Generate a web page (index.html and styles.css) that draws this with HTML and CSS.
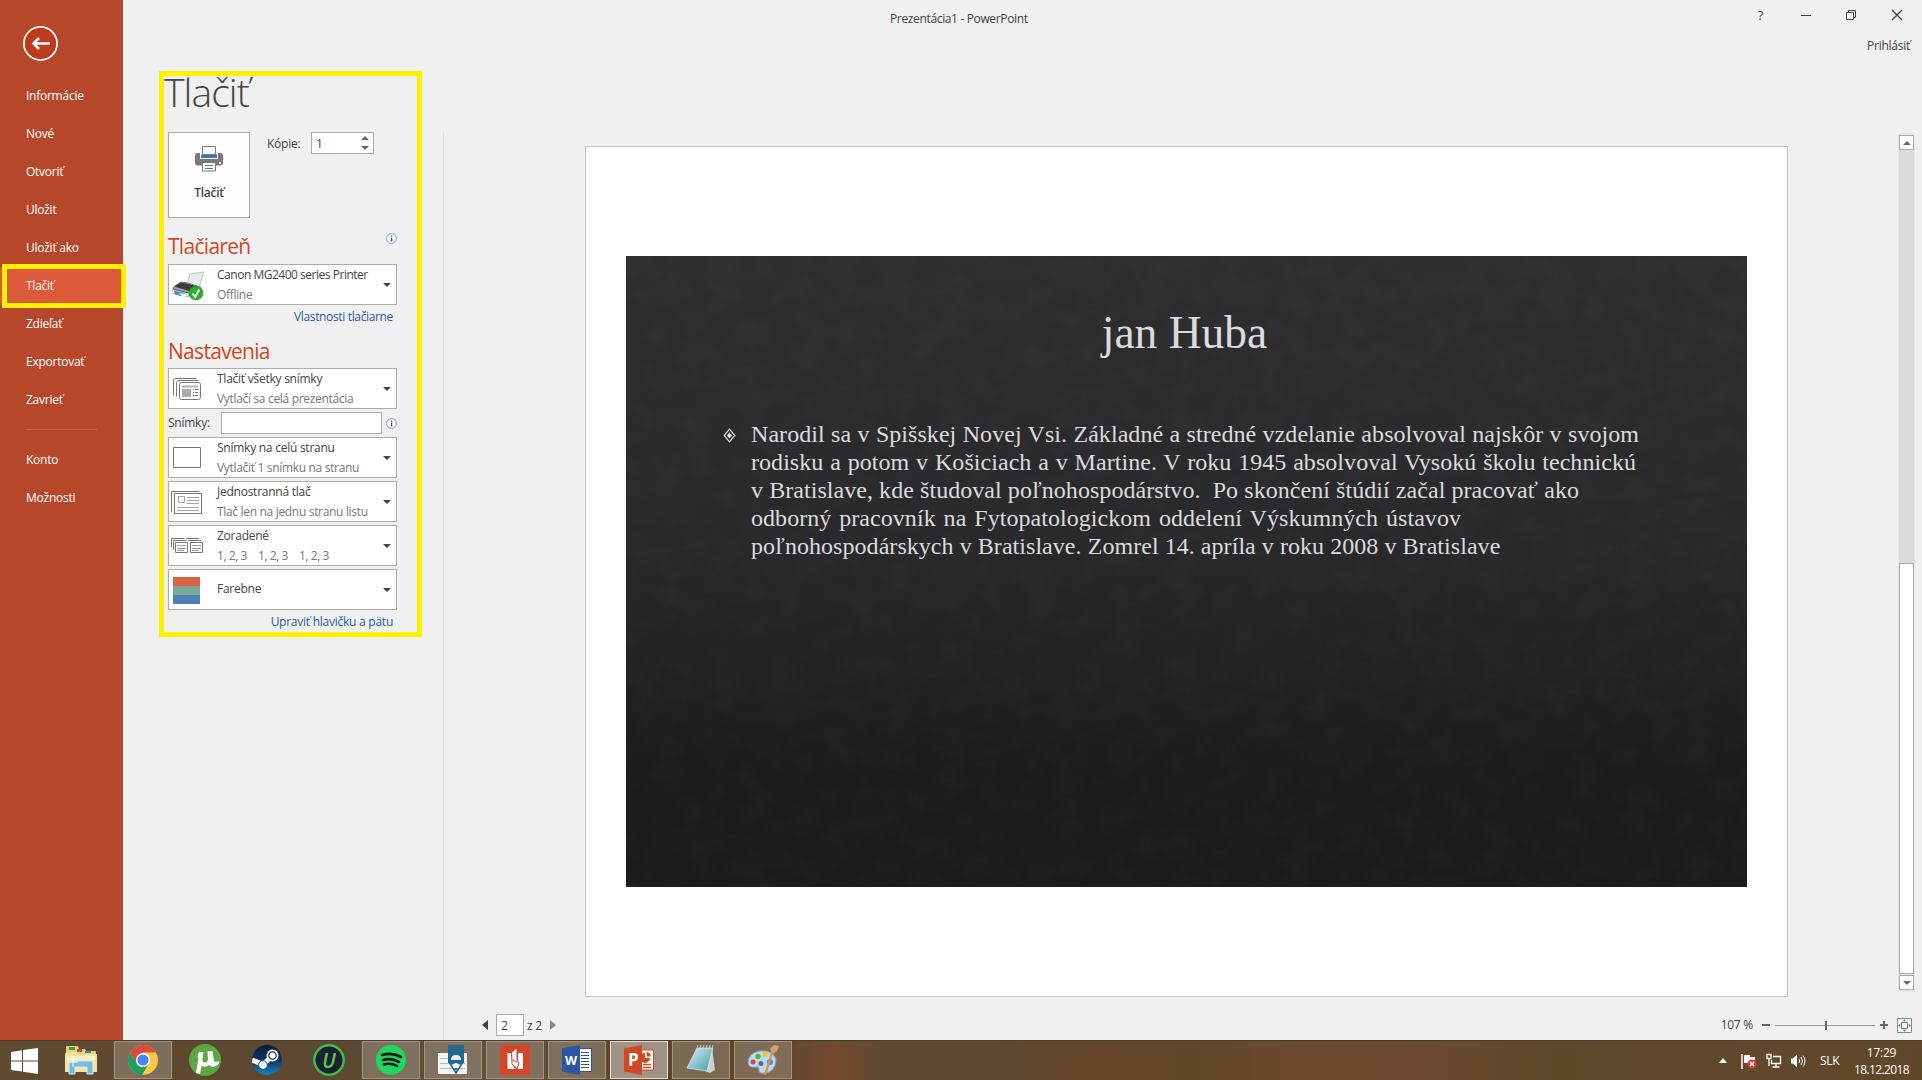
FILE: index.html
```html
<!DOCTYPE html>
<html lang="sk">
<head>
<meta charset="utf-8">
<title>Prezentácia1 - PowerPoint</title>
<link rel="stylesheet" href="styles.css">
</head>
<body>
<div class="backstage">
  <nav class="nav">
    <svg class="back" width="36" height="36" viewBox="0 0 36 36" fill="none" stroke="#fff"><circle cx="18.500" cy="17.500" r="16.600" fill="#be3a1c" stroke-width="1.800"/><path d="M28 17.500H11.500M17 12L11.500 17.500l5.500 5.500" stroke-width="2.600"/></svg>
    <a class="nav-item">Informácie</a>
    <a class="nav-item">Nové</a>
    <a class="nav-item">Otvoriť</a>
    <a class="nav-item">Uložit</a>
    <a class="nav-item">Uložiť ako</a>
    <a class="nav-item active">Tlačiť</a>
    <a class="nav-item">Zdieľať</a>
    <a class="nav-item">Exportovať</a>
    <a class="nav-item">Zavrieť</a>
    <hr class="nav-rule">
    <a class="nav-item">Konto</a>
    <a class="nav-item">Možnosti</a>
    <div class="mark mark-nav"></div>
  </nav>
  <main class="main">
    <header class="titlebar">
      <div class="doc-title">Prezentácia1 - PowerPoint</div>
      <div class="window-side">
        <div class="window-buttons">
          <span class="help">?</span>
          <svg width="10" height="12" viewBox="0 0 10 12"><path d="M0 6.500h10" stroke="#444"/></svg>
          <svg width="10" height="12" viewBox="0 0 10 12" fill="none" stroke="#444"><path d="M.5 3.500h7v7h-7zM2.500 3.500v-2h7v7h-2"/></svg>
          <svg width="12" height="12" viewBox="0 0 12 12"><path d="M1 1l10 10M11 1L1 11" stroke="#444" stroke-width="1.400"/></svg>
        </div>
        <a class="sign-in">Prihlásiť</a>
      </div>
    </header>
    <h1 class="heading">Tlačiť</h1>
    <div class="content">
      <section class="settings">
        <div class="print-row">
          <button class="print-button">
            <svg width="28" height="26" viewBox="0 0 28 26"><path d="M1.500 7H26.500l1.500 2v9l-2 1.500H2L0 18V9z" fill="#7a7a7a"/><path d="M5 6.500h18V13H5z" fill="#fff"/><path d="M6 8.500h16V12H6z" fill="#3f74ae"/><path d="M7.500.5h13v8h-13z" fill="#fff" stroke="#7a7a7a"/><path d="M7.500 16.500h13v8.500h-13z" fill="#fff" stroke="#7a7a7a"/><path d="M10 19.500h8M10 22.500h8" stroke="#4b87a8"/><path d="M24 16h2v2h-2z" fill="#fff"/></svg>
            <span>Tlačiť</span>
          </button>
          <span class="copies-label">Kópie:</span>
          <div class="spinner"><span>1</span>
            <svg width="8" height="14" viewBox="0 0 8 14" fill="#666"><path d="M0 4l4-4 4 4zM0 10l4 4 4-4z"/></svg>
          </div>
        </div>
        <div class="section-row"><h2>Tlačiareň</h2>
          <svg class="info" width="11" height="11" viewBox="0 0 11 11"><circle cx="5.500" cy="5.500" r="4.900" fill="#fbfcfe" stroke="#7c9ccb"/><path d="M5 2.500h1.200v1.200H5zM5 4.600h1.200v3.800H5z" fill="#41536d"/></svg>
        </div>
        <div class="drop">
          <svg width="34" height="30" viewBox="0 0 34 30">
            <path d="M18.500 3l14-2-4 15-12-2z" fill="#e9ecee" stroke="#a9aeb2" stroke-width=".7"/>
            <path d="M1 17l8-6 8 1 13 4v4l-13 6-15-3z" fill="#9aa3aa"/><path d="M3 15.500l7-4.500 18 4.500-8 5z" fill="#3b3e41"/><path d="M10 11l7 1 9 3" fill="none" stroke="#777c80"/>
            <path d="M1 17.500l19 4.500-4 3-14-3z" fill="#e3e8ec"/><path d="M3 19.500l11 2.500-2 3.500-8-2z" fill="#4d8fc2"/><path d="M8 22l6 1 3 2-5 1z" fill="#f2f6f9"/><path d="M2 18l18 4.500" stroke="#50565b"/>
            <circle cx="25" cy="22" r="7" fill="#2ab02b" stroke="#179019" stroke-width=".6"/><path d="M21.500 22.500l2.700 3.500 4-7.500" fill="none" stroke="#fff" stroke-width="2"/>
          </svg>
          <div class="drop-text"><span class="printer-name">Canon MG2400 series Printer</span><small>Offline</small></div>
          <i class="caret"></i>
        </div>
        <a class="link printer-link">Vlastnosti tlačiarne</a>
        <div class="section-row second"><h2>Nastavenia</h2></div>
        <div class="drop">
          <svg width="34" height="30" viewBox="0 0 34 30" fill="none" stroke="#777"><path d="M2.500 20.500v-15q0-2 2-2h21M5.500 21.500v-14q0-2 2-2h20"/><rect x="8.500" y="7.500" width="21" height="17" rx="2"/><path d="M11 11.500h16" stroke="#b0b0b0" stroke-width="2"/><path d="M11 14h9v8h-9z" fill="#aaa" stroke="none"/><path d="M22 14.500h5M22 17.500h5M22 20.500h5" stroke-dasharray="1 1 3"/></svg>
          <div class="drop-text"><span>Tlačiť všetky snímky</span><small>Vytlačí sa celá prezentácia</small></div>
          <i class="caret"></i>
        </div>
        <div class="slides-row"><label>Snímky:</label><div class="field"></div>
          <svg class="info" width="11" height="11" viewBox="0 0 11 11"><circle cx="5.500" cy="5.500" r="4.900" fill="#fbfcfe" stroke="#7c9ccb"/><path d="M5 2.500h1.200v1.200H5zM5 4.600h1.200v3.800H5z" fill="#41536d"/></svg>
        </div>
        <div class="drop">
          <svg width="34" height="30" viewBox="0 0 34 30"><path d="M2.500 3.500h27v20h-27z" fill="#fff" stroke="#777"/></svg>
          <div class="drop-text"><span>Snímky na celú stranu</span><small>Vytlačiť 1 snímku na stranu</small></div>
          <i class="caret"></i>
        </div>
        <div class="drop">
          <svg width="34" height="30" viewBox="0 0 34 30" fill="none" stroke="#777"><path d="M.5 24V3.500h28M3.500 5.500h27v20h-27z"/><path d="M7.500 8.500h6v6h-6zM16 9.500h12M16 12.500h12M16 15.500h12M6 19.500h22M6 22.500h22" stroke="#a5a5a5"/></svg>
          <div class="drop-text"><span>Jednostranná tlač</span><small>Tlač len na jednu stranu listu</small></div>
          <i class="caret"></i>
        </div>
        <div class="drop">
          <svg width="34" height="30" viewBox="0 0 34 30" fill="none" stroke="#777"><path d="M.5 15V6.500h13M2.500 18V8.500h13M15 6.500h13M17 8.500h13"/><path d="M4.500 10.500h12v10h-12zM19.500 10.500h12v10h-12z"/><path d="M6 13.500h9M6 16.500h9M6 18.500h7M21 13.500h9M21 16.500h9M21 18.500h7" stroke="#999"/></svg>
          <div class="drop-text"><span>Zoradené</span><small class="sets">1, 2, 3<b></b>1, 2, 3<b></b>1, 2, 3</small></div>
          <i class="caret"></i>
        </div>
        <div class="drop">
          <svg width="34" height="30" viewBox="0 0 34 30"><path d="M2 1h27v9H2z" fill="#d96445"/><path d="M2 10h27v9H2z" fill="#78a898"/><path d="M2 19h27v9H2z" fill="#4b80b9"/></svg>
          <div class="drop-text single"><span>Farebne</span></div>
          <i class="caret"></i>
        </div>
        <a class="link">Upraviť hlavičku a pätu</a>
        <div class="mark mark-panel"></div>
      </section>
      <section class="preview">
        <div class="stage">
          <div class="sheet">
            <article class="slide">
              <svg class="grain" width="1121" height="631"><filter id="grain"><feTurbulence type="fractalNoise" baseFrequency=".035 .045" numOctaves="5" seed="4"/><feColorMatrix values="0 0 0 0 1  0 0 0 0 1  0 0 0 0 1  .5 0 0 0 -.17"/></filter><rect width="1121" height="631" filter="url(#grain)" opacity=".08"/></svg>
              <h3>jan Huba</h3>
              <div class="bullet-row">
                <svg width="13" height="15" viewBox="0 0 13 15"><path d="M6.500 1.200l5.300 6.300-5.300 6.300L1.200 7.500z" fill="none" stroke="#ddd" stroke-width="1.200"/><path d="M6.500 4.500l2.600 3-2.600 3-2.600-3z" fill="#ddd"/></svg>
                <div class="lines">
                  <p class="l1">Narodil sa v Spišskej Novej Vsi. Základné a stredné vzdelanie absolvoval najskôr v svojom</p>
                  <p class="l2">rodisku a potom v Košiciach a v Martine. V roku 1945 absolvoval Vysokú školu technickú</p>
                  <p class="l3">v Bratislave, kde študoval poľnohospodárstvo.&nbsp; Po skončení štúdií začal pracovať ako</p>
                  <p class="l4">odborný pracovník na Fytopatologickom oddelení Výskumných ústavov</p>
                  <p class="l5">poľnohospodárskych v Bratislave. Zomrel 14. apríla v roku 2008 v Bratislave</p>
                </div>
              </div>
            </article>
          </div>
          <div class="scrollbar">
            <div class="sb-btn"><i class="up"></i></div>
            <div class="sb-track"></div>
            <div class="sb-thumb"></div>
            <div class="sb-btn"><i class="down"></i></div>
          </div>
        </div>
        <footer class="status">
          <div class="pager">
            <svg width="6" height="10" viewBox="0 0 6 10"><path d="M6 0v10L0 5z" fill="#444"/></svg>
            <div class="page-no">2</div><span>z 2</span>
            <svg width="6" height="10" viewBox="0 0 6 10"><path d="M0 0v10l6-5z" fill="#888"/></svg>
          </div>
          <div class="zoom">
            <span>107 %</span>
            <svg width="128" height="16" viewBox="0 0 128 16"><path d="M0 8h8M118 8h8M122 4v8" stroke="#666" stroke-width="2"/><path d="M13 8.500h100" stroke="#999da6"/><path d="M64 4v9" stroke="#666" stroke-width="2"/></svg>
            <svg width="15" height="15" viewBox="0 0 15 15"><path d="M.5.5h14v14H.5z" fill="#fdfdfd" stroke="#888"/><path d="M4.500 4.500h6v6h-6z" fill="none" stroke="#777"/><path d="M5.500 3.200h4l-2-2zM5.500 11.800h4l-2 2zM3.200 5.500v4l-2-2zM11.800 5.500v4l2-2z" fill="#4479b5"/></svg>
          </div>
        </footer>
      </section>
    </div>
  </main>
</div>
<div class="taskbar">
  <div class="start"><svg width="27" height="26" viewBox="0 0 27 26" fill="#fff"><path d="M0 4l11-1.700V12.500H0zM12 2.100L27 0v12.500H12zM0 13.500h11v10L0 22zM12 13.500h15V26l-15-2.200z"/></svg></div>
  <div class="task plain"><svg width="32" height="30" viewBox="0 0 32 30"><path d="M1 2q0-1 1-1h11l1 3h6l1 2h9q1 0 1 1v19H1z" fill="#e7cf83"/><path d="M4 2h6v3H4z" fill="#35a343"/><path d="M12 4h5v3h-5z" fill="#cf4b24"/><path d="M20 6h6v2h-6z" fill="#2f8bd0"/><path d="M0 8l12-1 2 2h18v18H0z" fill="#f6e3a2"/><path d="M2 11h28v4H2z" fill="#fbefc5"/><path d="M4 29V18q0-2 2-2h20q2 0 2 2v11h-6v-7H10v7z" fill="#73bbdf" stroke="#d2edf8"/><path d="M8 12v10M3 17h10" stroke="#fff"/></svg></div>
  <div class="task"><svg width="30" height="30" viewBox="0 0 30 30"><circle cx="15" cy="15" r="15" fill="#f9c845"/><path d="M2 7.500A15 15 0 0 1 28 7.500H15L8.500 18z" fill="#dc4a3d"/><path d="M2 7.500A15 15 0 0 0 14 30l6-10-5 2q-5 0-6.500-4z" fill="#1d9f5e"/><circle cx="15" cy="15" r="7" fill="#fff"/><circle cx="15" cy="15" r="5.600" fill="#4587f0"/></svg></div>
  <div class="task plain"><svg width="32" height="32" viewBox="0 0 32 32"><circle cx="16" cy="16" r="16" fill="#5aa83f"/><path d="M10 8l-1.500 4 1 2-2.500 15 4 1 1.500-8q4 2 8-1 2 3 5 1.500 4-1 5-4.500l-1-1q-3 2-4.500 0L23.500 7h-5l.5 9q-1 2.500-3 2.500-3-.5-2.500-3.500L14.500 8z" fill="#fff"/></svg></div>
  <div class="task plain"><svg width="30" height="30" viewBox="0 0 30 30"><defs><linearGradient id="steam" x2="0" y2="1"><stop offset="0" stop-color="#10193b"/><stop offset=".5" stop-color="#103360"/><stop offset="1" stop-color="#1687bf"/></linearGradient></defs><circle cx="15" cy="15" r="15" fill="url(#steam)"/><path d="M0 15l11 4.500L20 11" fill="none" stroke="#fff" stroke-width="5"/><circle cx="20.500" cy="10.500" r="6" fill="#fff"/><circle cx="20.500" cy="10.500" r="3.700" fill="#fff" stroke="#14325d" stroke-width="1.300"/><circle cx="11" cy="20" r="4.300" fill="#fff" stroke="#14568c"/></svg></div>
  <div class="task plain"><svg width="32" height="32" viewBox="0 0 32 32"><circle cx="16" cy="16" r="14.700" fill="#1b2130" stroke="#42bd4f" stroke-width="2.400"/><path d="M14 9l-2 9q-.8 5 3 5t5-5l2-9" fill="none" stroke="#5cc34d" stroke-width="2.500"/></svg></div>
  <div class="task"><svg width="30" height="30" viewBox="0 0 30 30"><circle cx="15" cy="15" r="15" fill="#1ed760"/><path d="M6 10q10-3 19 2M7 15q9-2.500 16 2M8 19.500q7-2 13 1.500" fill="none" stroke="#121512" stroke-width="2.600" stroke-linecap="round"/></svg></div>
  <div class="task"><svg width="30" height="30" viewBox="0 0 30 30"><path d="M0 8h29v21H0z" fill="#f5f5f5"/><path d="M2 13.500h25M2 18.500h25M2 23.500h25" stroke="#bbb"/><path d="M10 0h16v18H10z" fill="#25688c"/><path d="M11 17l7 11 7-11-3 2-4-2-4 2z" fill="#fff" stroke="#25688c" stroke-width="1.500"/><path d="M13 15q0-5 5-5t5 5z" fill="#eee"/><path d="M16 23h4l-2 3z" fill="#25688c"/></svg></div>
  <div class="task"><svg width="30" height="30" viewBox="0 0 30 30"><path d="M0 0h30v30H0z" fill="#d4452a"/><path d="M7.500 8H12v11l3 5H7.500zM18 8h5v16h-8l3-3z" fill="#fff"/><path d="M11.500 7L17 3v12l2 3-2 6-5-5z" fill="#fff" stroke="#d4452a"/><path d="M12 15l5 2" stroke="#d4452a"/></svg></div>
  <div class="task"><svg width="30" height="30" viewBox="0 0 30 30"><path d="M16 3.500h13.500v23H16z" fill="#fff" stroke="#2b579a"/><path d="M19 7.500h8M19 10.500h8M19 13.500h8M19 16.500h8M19 19.500h8M19 22.500h8" stroke="#2b579a"/><path d="M0 3.500L18 0v30L0 26.500z" fill="#2b57a0"/><text x="3" y="20" class="badge-letter word">W</text></svg></div>
  <div class="task current"><svg width="30" height="30" viewBox="0 0 30 30"><path d="M16 5h13.500v20H16z" fill="#fff" stroke="#d24726"/><path d="M19 19.500h8M19 22.500h8" stroke="#d24726" stroke-width="1.500"/><path d="M21 8v5h5a5 5 0 1 1-5-5zM22.500 7a5 5 0 0 1 4.500 4.500h-4.500z" fill="#d24726"/><path d="M0 3.500L18 0v30L0 26.500z" fill="#d24726"/><text x="4" y="20.500" class="badge-letter">P</text></svg></div>
  <div class="task"><svg width="32" height="30" viewBox="0 0 32 30"><defs><linearGradient id="note" x2="1" y2="1"><stop offset="0" stop-color="#d8f1f4"/><stop offset="1" stop-color="#3e9aa9"/></linearGradient></defs><path d="M27 3l3 22-5 3-5-2z" fill="#c8d3d0"/><path d="M12 3h16l-6 23-20-3z" fill="url(#note)" stroke="#e2f3f3" stroke-width=".7"/><path d="M12 4L13 0M15 4l1-4M18 4l1-4M21 4l1-4M24 4l1-4M27 4l1-4" stroke="#ccc"/></svg></div>
  <div class="task"><svg width="32" height="32" viewBox="0 0 32 32"><path d="M1 19Q1 9 13 7q14-1 16 9-1 12-11 13-7 1-6-4 0-3-4-2-6 1-7-4z" fill="#b9daf0" stroke="#7caed2"/><circle cx="6" cy="18" r="2.500" fill="#da4a3a"/><circle cx="11" cy="12.500" r="2.700" fill="#58b447"/><circle cx="18" cy="10" r="2.700" fill="#f0c32f"/><circle cx="14" cy="19.500" r="2.500" fill="#5b6f83"/><circle cx="23" cy="18" r="3" fill="#3f8edb"/><path d="M26 6L18 31" stroke="#dd9237" stroke-width="2.400"/><path d="M23 5l4-4 5 1-2 5-4 3z" fill="#d3a26b"/></svg></div>
  <div class="tray">
    <svg width="8" height="5" viewBox="0 0 8 5"><path d="M0 5l4-5 4 5z" fill="#fff"/></svg>
    <svg class="flag" width="16" height="16" viewBox="0 0 16 16"><path d="M1 1v15" stroke="#fff" stroke-width="1.500"/><path d="M3 2h6v2h5v6H3z" fill="#fff"/><circle cx="11" cy="11" r="4.500" fill="#dc3a32"/><path d="M9 9l4 4M13 9l-4 4" stroke="#fff" stroke-width="1.500"/></svg>
    <svg class="net" width="16" height="16" viewBox="0 0 16 16" fill="none" stroke="#fff" stroke-width="1.300"><path d="M7 3.500h7.500v7H5.500V7M10 10.500v3M6.500 14h7M1 1.500h4v4H1zM3 5.500V13"/></svg>
    <svg class="vol" width="16" height="16" viewBox="0 0 16 16"><path d="M1 5.500h2l4-4v13l-4-4H1z" fill="#fff"/><path d="M9 6q1.500 2 0 4M11 4q3 4 0 8M13 2.500q4 5.500 0 11" fill="none" stroke="#fff"/></svg>
    <span class="lang">SLK</span>
    <div class="clock"><span>17:29</span><span class="date">18.12.2018</span></div>
  </div>
</div>
</body>
</html>
```
FILE: styles.css
```css
* { box-sizing: border-box; }
body { margin: 0; width: 1922px; height: 1080px; overflow: hidden; background: #f0f0f0; font: 12px/16px "Open Sans", "Noto Sans", sans-serif; color: #444; letter-spacing: -.25px; }
svg { display: block; flex: none; }
h1, h2, h3, p { margin: 0; font-weight: 400; }
.backstage { display: flex; height: 1040px; }
.nav { position: relative; width: 123px; background: #b7472a; color: #fff; display: flex; flex-direction: column; }
.back { margin: 26px 0 15px 22px; }
.nav-item { height: 38px; line-height: 38px; padding-left: 26px; white-space: nowrap; }
.nav-item.active { background: #dc5939; }
.nav-rule { width: 71px; height: 1px; border: 0; margin: 10px 0 11px 26px; background: #dc5939; }
.mark { position: absolute; border: 5px solid #fff200; }
.mark-nav { left: 2px; top: 264px; width: 124px; height: 44px; }
.main { flex: 1; display: flex; flex-direction: column; }
.titlebar { height: 71px; position: relative; display: flex; justify-content: flex-end; }
.doc-title { position: absolute; left: 767px; top: 11px; letter-spacing: -.35px; }
.window-side { display: flex; flex-direction: column; align-items: flex-end; padding: 8px 12px 0 0; }
.window-buttons { display: flex; align-items: center; height: 14px; margin: 0 7px 15px 0; }
.window-buttons svg { margin-left: 35px; }
.help { font-size: 13px; }
.window-buttons .help + svg { margin-left: 38px; }
.sign-in { padding-top: 1px; }
.heading { height: 61px; padding: 1px 0 0 41px; font-size: 39px; line-height: 40px; font-weight: 300; letter-spacing: -.9px; }
.content { display: flex; height: 908px; }
.settings { position: relative; width: 321px; padding-left: 45px; border-right: 1px solid #e0e0e0; display: flex; flex-direction: column; }
.mark-panel { left: 36px; top: -61px; width: 263px; height: 566px; }
.print-row { display: flex; height: 86px; }
.print-button { width: 82px; height: 86px; padding: 13px 0 0; border: 1px solid #ababab; background: #fdfdfd; font: 600 12px/16px "Open Sans", sans-serif; letter-spacing: -.3px; color: #444; display: flex; flex-direction: column; align-items: center; gap: 13px; }
.copies-label { margin: 4px 0 0 17px; width: 44px; }
.spinner { width: 63px; height: 22px; border: 1px solid #ababab; background: #fff; display: flex; justify-content: space-between; align-items: center; padding: 0 4px 0 4px; }
.spinner span { padding-top: 1px; }
.section-row { display: flex; justify-content: space-between; width: 229px; height: 46px; padding-top: 13px; }
.section-row h2 { font-size: 21px; line-height: 30px; color: #d24726; letter-spacing: -.7px; }
.section-row .info { margin-top: 2px; }
.section-row.second { height: 42px; padding-top: 10px; }
.drop { width: 229px; height: 41px; margin-bottom: 3px; flex: none; border: 1px solid #ababab; background: #fff; display: flex; align-items: center; padding: 0 5px 0 2px; }
.drop svg { margin-top: 3px; }
.drop-text { flex: 1; padding-left: 12px; display: flex; flex-direction: column; gap: 4px; white-space: nowrap; }
.drop-text.single { margin-top: -2px; }
.drop-text small { font-size: 12px; color: #777; letter-spacing: -.32px; }
.printer-name { letter-spacing: -.48px; }
.sets b { display: inline-block; width: 11px; }
.sets { word-spacing: -.4px; }
.caret { border: 4px solid transparent; border-top-color: #444; border-bottom: 0; }
.link { width: 225px; height: 18px; line-height: 18px; text-align: right; color: #2a6099; }
.printer-link { letter-spacing: -.35px; }
.slides-row { display: flex; align-items: center; width: 229px; height: 22px; margin-bottom: 3px; }
.slides-row label { width: 53px; }
.slides-row .field { width: 161px; height: 22px; border: 1px solid #ababab; background: #fff; }
.slides-row .info { margin-left: 4px; }
.preview { flex: 1; display: flex; flex-direction: column; }
.stage { display: flex; justify-content: space-between; height: 876px; padding: 0 7px 0 141px; }
.sheet { width: 1203px; height: 851px; margin-top: 14px; padding: 109px 0 0 40px; border: 1px solid #c6c6c6; background: #fff; }
.slide { position: relative; width: 1121px; height: 631px; background: linear-gradient(#2e2e30, #29292b 45%, #1c1c1e 82%, #1b1b1d); color: #dcdcdc; font-family: "Liberation Serif", serif; }
.grain { position: absolute; inset: 0; }
.slide h3 { position: relative; padding-top: 51px; height: 164px; font-size: 45.5px; line-height: 52px; text-align: center; letter-spacing: 0; text-indent: -4px; }
.bullet-row { position: relative; display: flex; padding-left: 97px; gap: 15px; }
.bullet-row svg { margin-top: 8px; }
.lines { font-size: 24px; line-height: 28.1px; letter-spacing: .05px; }
.lines p { white-space: nowrap; text-align-last: justify; }
.l1 { width: 888px; } .l2 { width: 885px; } .l3 { width: 828px; } .l4 { width: 710px; } .l5 { width: 749px; }
.scrollbar { width: 17px; height: 859px; background: #e6e6e6; margin-top: 1px; padding: 2px 1px; display: flex; flex-direction: column; }
.sb-btn { height: 15px; border: 1px solid #ababab; background: #fff; display: grid; place-items: center; }
.sb-track { height: 413px; background: #dadada; }
.sb-thumb { flex: 1; border: 1px solid #ababab; background: #fff; margin-bottom: 1px; }
.up { border: 4px solid transparent; border-bottom-color: #666; border-top: 0; }
.down { border: 4px solid transparent; border-top-color: #666; border-bottom: 0; }
.status { display: flex; justify-content: space-between; height: 32px; align-items: flex-start; padding: 6px 10px 0 38px; }
.pager { display: flex; align-items: center; }
.page-no { width: 28px; height: 22px; margin: 0 3px 0 8px; padding: 3px 0 0 4px; border: 1px solid #ababab; background: #fff; }
.pager span { width: 23px; padding-top: 1px; white-space: nowrap; }
.zoom { display: flex; align-items: center; height: 22px; }
.zoom span { margin-right: 9px; }
.zoom svg + svg { margin-left: 7px; }
.taskbar { height: 40px; border-top: 1px solid #4d3b27; background: linear-gradient(90deg, #604a30 0, #5d4830 330px, #62503a 480px, #5a4328 700px, #644730 790px, #73492d 835px, #5f4a30 880px, #5f4a2f 1000px, #64462a 1100px, #60472a 1200px, #6c4a2f 1300px, #6c4a31 1400px, #5d482a 1560px, #62492e 1750px, #5f4729); display: flex; gap: 4px; align-items: stretch; color: #fff; }
.start { width: 48px; display: grid; place-items: center; }
.task { width: 58px; margin-bottom: 1px; border: 1px solid #a59684; background: rgba(255,255,255,.2); display: grid; place-items: center; }
.task.plain { border-color: transparent; background: none; }
.task.current { border-color: #e6ddd2; background: rgba(255,255,255,.42); }
.badge-letter { font: 700 17px "Open Sans", sans-serif; fill: #fff; }
.badge-letter.word { font-size: 12.5px; }
.tray { margin-left: auto; display: flex; align-items: center; padding-right: 12px; }
.flag { margin-left: 14px; }
.net { margin-left: 9px; }
.vol { margin-left: 8px; }
.lang { margin-left: 14px; width: 33px; }
.clock { width: 57px; display: flex; flex-direction: column; align-items: center; gap: 1px; padding-top: 1px; }
.date { letter-spacing: -.6px; }
```
